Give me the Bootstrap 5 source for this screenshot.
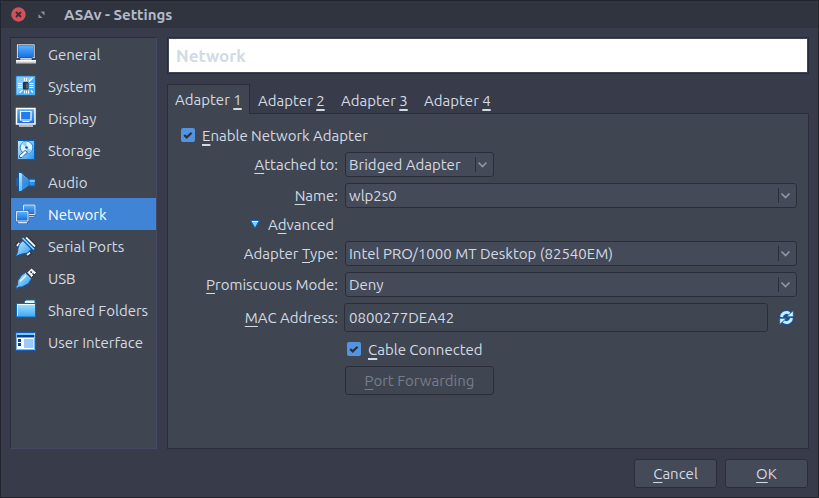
<!DOCTYPE html>
<html lang="en">
<head>
<meta charset="utf-8">
<meta name="viewport" content="width=device-width, initial-scale=1">
<title>ASAv - Settings</title>
<link href="https://cdn.jsdelivr.net/npm/bootstrap@5.3.0/dist/css/bootstrap.min.css" rel="stylesheet">
<style>
:root{--edge:#2b2e39;--win:#383c4a;--pane:#404651;--ctl:#454a58;--ink:#d3dae3;--accent:#4084d6}
body{background:var(--win);color:var(--ink);font:15px/21px Ubuntu,"Noto Sans","Open Sans",sans-serif}
.window{min-height:100vh;border:1px solid #22252e}
.titlebar{height:27px;background:#2f343f;padding:0 10px;border-radius:4px 4px 0 0}
.titlebar h1{font-size:15px;line-height:21px;font-weight:700;color:#b2bac8;margin-left:18px}
.titlebar button,.plain{background:none;border:0;padding:0;color:inherit;display:flex}
.resize{margin-left:11px}
.content{padding:9px 9px 0 9px;gap:10px}
.sidebar{width:147px;background:var(--pane);border:1px solid #434863;border-top-color:var(--edge);border-left-color:var(--edge)}
.sidebar a{height:32px;padding:0 4px;gap:11px;color:var(--ink);white-space:nowrap;text-decoration:none}
.sidebar a.current{background:var(--accent);color:#fff}
.sidebar svg{flex:none}
.heading{margin:0;border:1px solid var(--edge);background:#fff;box-shadow:inset 0 0 0 1px #404552;color:#d3dae6;font-size:17px;font-weight:700;line-height:21px;padding:7px 8px}
.tabs{margin-top:10px;margin-bottom:-1px}
.tabs button{background:none;border:1px solid transparent;border-bottom:0;padding:3px 7px 2px;height:30px;width:83px;color:var(--ink);white-space:nowrap;text-align:left;line-height:21px}
.tabs button.current{background:var(--pane);border-color:var(--edge);padding-bottom:4px;z-index:1}
.pane{border:1px solid var(--edge);background:var(--pane);padding:10px 11px 0 13px;gap:6px}
.formrow{display:grid;grid-template-columns:157px minmax(0,1fr);column-gap:7px;align-items:center}
.formrow>label{text-align:right;white-space:nowrap}
.check{height:22px;gap:7px}
.check input{width:14px;height:14px;margin:0;border:0;float:none}
.check input[type=checkbox]{border-radius:2px}
.check input:checked{background-color:#5294e2;background-size:14px;background-image:url("data:image/svg+xml,%3Csvg xmlns='http://www.w3.org/2000/svg' viewBox='0 0 14 14'%3E%3Cpath d='M3.2 7l2.500 2.400L10.600 4.800' fill='none' stroke='%232b3040' stroke-width='2.200'/%3E%3C/svg%3E")}
.cable{margin-left:2px}
select.combo{height:25px;padding:0 24px 0 3px;border:1px solid var(--edge);border-radius:3px;color:var(--ink);font-size:15px;line-height:21px;background:var(--ctl) url("data:image/svg+xml,%3Csvg xmlns='http://www.w3.org/2000/svg' width='18' height='15'%3E%3Cpath d='M.5 0v15' stroke='%232b2e39'/%3E%3Cpath d='M3.500 5.500L7.500 9.500l4-4' fill='none' stroke='%239197a3' stroke-width='1.600'/%3E%3C/svg%3E") no-repeat right center}
.short{width:149px}
.mac{height:29px;margin-left:-1px;padding:0 4px;border:1px solid var(--edge);border-radius:3px;background:#404552;color:var(--ink);font-size:15px}
.reload{margin:0 3px 0 11px}
.push{height:29px;padding:0;border:1px solid var(--edge);border-radius:3px;background:var(--ctl);color:var(--ink);font-size:15px;line-height:23px}
.push:disabled{background:var(--pane);border-color:var(--edge);color:#777d89;opacity:1}
.actions{padding:10px 10px 9px;gap:8px}
.actions .push{width:83px}
u{text-decoration-thickness:1px;text-underline-offset:3px;text-decoration-skip-ink:none}
.tabs u,.check u{text-decoration-thickness:2px}
</style>
</head>
<body>
<div class="window d-flex flex-column">
  <header class="titlebar d-flex align-items-center">
    <button type="button" aria-label="Close"><svg width="15" height="15" viewBox="0 0 15 15"><circle cx="7.5" cy="7.5" r="7.2" fill="#d35258"/><path d="M5 5l5 5M10 5l-5 5" stroke="#2f343f" stroke-width="2"/></svg></button>
    <button type="button" class="resize" aria-label="Maximize"><svg width="9" height="9" viewBox="0 0 9 9" fill="#8b93a1"><path d="M3.500 1.500h4V5.500zM1.500 4v4h4z"/></svg></button>
    <h1 class="mb-0">ASAv - Settings</h1>
  </header>
  <div class="content d-flex flex-grow-1">
    <nav class="sidebar flex-shrink-0" aria-label="Categories">
      <a href="#" class="d-flex align-items-center"><svg width="22" height="22" viewBox="0 0 22 22"><defs><linearGradient id="b" x2="0" y2="1"><stop stop-color="#55b5ff"/><stop offset="1" stop-color="#1968dd"/></linearGradient><linearGradient id="l" x2="1" y2="1"><stop stop-color="#c5edff"/><stop offset="1" stop-color="#2995ee"/></linearGradient></defs><path d="M1.500 1h18.500v14.500h-3v1.500h-12v-1.500h-3.500z" fill="#fff" stroke="#252c38" stroke-width=".7"/><path d="M3 2.500h15.500v11.500l-1.500 1h-12.500l-1.500-1z" fill="url(#b)" stroke="#06408e" stroke-width=".5"/><path d="M1 17h20v3.500H1z" fill="#c9c9c9"/><path d="M1 17h20v1.500H1z" fill="#fff"/></svg>General</a>
      <a href="#" class="d-flex align-items-center"><svg width="22" height="22" viewBox="0 0 22 22"><path d="M1 1h19.500v19.500H1z" fill="#4aaef4" stroke="#0a63bd"/><path d="M1.500 1.500h18.500L1.500 20z" fill="#82c9fa"/><path d="M8.500 7.500h4.500v6.500H8.500z" fill="#34383e" stroke="#18344f"/><path d="M11.500 8.500h1v5h-1z" fill="#888"/><path d="M3 8.500h4M3 10.500h4M3 12.500h4M14.500 8.500h4M14.500 10.500h4M14.500 12.500h4M9.500 18.500v-3M11.500 18.500v-3M13.500 18.500v-3M9.500 6V3M11.500 6V3M14 6.500l3.500-3.500M4.500 18l3-3M16 15.500l2 2" stroke="#fff" stroke-width="1.100"/></svg>System</a>
      <a href="#" class="d-flex align-items-center"><svg width="22" height="22" viewBox="0 0 22 22"><path d="M1.500 1.500h18.500v15.500h-18.500z" fill="url(#b)" stroke="#fff" stroke-width="1.500"/><path d="M5.500 4.500h10.500v8.500h-10.500z" fill="#247de6" stroke="#fff" stroke-width="1.200"/><path d="M7.500 14.500h7" stroke="#fff"/><path d="M4 19h14" stroke="#ddd" stroke-width="1.500"/></svg>Display</a>
      <a href="#" class="d-flex align-items-center"><svg width="22" height="22" viewBox="0 0 22 22"><path d="M2.500 1.500h17v19h-17z" fill="url(#l)" stroke="#075eb5"/><circle cx="11.500" cy="8.500" r="6.300" fill="#dff3ff" stroke="#1c69b0" stroke-width=".8"/><path d="M11.500 8.500L6.500 4.500A6 6 0 0 1 11.500 2.500zM11.500 8.500l5.500 3A6 6 0 0 1 11.500 14.500z" fill="#8fd0f8"/><circle cx="11.500" cy="8.500" r="1.300" fill="#094c99"/><path d="M10 11.500l2.500 1.500-5.500 5.500H4.500v-2z" fill="#fff" stroke="#155c9e" stroke-width=".9"/></svg>Storage</a>
      <a href="#" class="d-flex align-items-center"><svg width="22" height="22" viewBox="0 0 22 22"><path d="M13 8h7v7h-7z" fill="#2c92e9" stroke="#075bb0"/><path d="M13 10h7" stroke="#8dd3ff" stroke-width="1.500"/><path d="M3.500 1.500H6l8 7v6l-8 6H3.500z" fill="url(#l)" stroke="#075bb0"/><path d="M7 3v16l6-5V9z" fill="#2376c9" opacity=".65"/><path d="M3 7H1.500v8H3z" fill="#126bc0"/></svg>Audio</a>
      <a href="#" class="current d-flex align-items-center" aria-current="page"><svg width="22" height="22" viewBox="0 0 22 22"><path d="M7.500 1h13.500v11.500h-2v2h-8z" fill="#4c6585"/><path d="M8.500 2h11.500v9.500H8.500z" fill="url(#b)" stroke="#d5e4f5"/><path d="M11 13.500h8" stroke="#b9cbe0"/><path d="M.5 7.500H14V19h-1v2H2v-2H.5z" fill="#4c6585"/><path d="M1.500 8.500H13V18H1.500z" fill="url(#b)" stroke="#d5e4f5"/><path d="M3 19.700h9" stroke="#dce7f2" stroke-width="1.300"/></svg>Network</a>
      <a href="#" class="d-flex align-items-center"><svg width="22" height="22" viewBox="0 0 22 22"><path d="M11 2.500l9.500 9.500M1.500 11l3-3.500M12 20.500l3.500-3.500" stroke="#222831" stroke-width="4"/><path d="M11 2.500l9 9M2 11l2.500-3M12 20l3-2.500" stroke="#eee" stroke-width="2.200"/><path d="M8 5.500l8.500 8.500-4 4-5.500 1-3 1-2.500 1-.5-.5 1.500-3 .5-4 1.500-4.500z" fill="url(#l)" stroke="#075bb0"/><path d="M7 2.500L19.500 15" stroke="#05529d" stroke-width="3.600"/><path d="M7.500 3l11.500 11.500" stroke="#8bd2ff" stroke-width="1.700"/></svg>Serial Ports</a>
      <a href="#" class="d-flex align-items-center"><svg width="22" height="22" viewBox="0 0 22 22"><path d="M12 5.500l4.500-4.500 5 4.500-5 5z" fill="#f4f4f4" stroke="#252525" stroke-width=".8"/><path d="M15.500 4.500l1.300 1.300M17.500 6.500l1.300 1.300" stroke="#222" stroke-width="1.500"/><path d="M10.500 5.500l6 6-3 5-6.500 3.500L3.500 20 2 21.500.8 20 2.500 18l.5-4.500L6.500 8.500z" fill="url(#l)" stroke="#0860b6"/><path d="M5 14.500L11 8.500" stroke="#e4f8ff" stroke-width="1.500"/></svg>USB</a>
      <a href="#" class="d-flex align-items-center"><svg width="22" height="22" viewBox="0 0 22 22"><path d="M9.500 2.500l1.500-1.500h9v4h-11z" fill="#e7faff" stroke="#0768bd"/><path d="M1.500 4.500h19V18h-19z" fill="url(#f)" stroke="#0768bd"/><defs><linearGradient id="f" x2="0" y2="1"><stop stop-color="#9fe4ff"/><stop offset="1" stop-color="#42a5f5"/></linearGradient></defs><path d="M2 5.500h18" stroke="#eefcff"/><path d="M2.500 6v11" stroke="#c6efff"/></svg>Shared Folders</a>
      <a href="#" class="d-flex align-items-center"><svg width="22" height="22" viewBox="0 0 22 22"><path d="M1 1.500h19.500v18H1z" fill="#fff" stroke="#0a62be"/><path d="M2 2h17.500v2H2z" fill="#7bc8ff"/><path d="M2 4h17.500v2.500H2z" fill="#073f9d"/><path d="M3 8h3v3H3zM3 12h3v3H3z" fill="#063f9d"/><path d="M9 8h9.500v9H9z" fill="#9bc8ff"/><path d="M2 18.500h17.500V7" fill="none" stroke="#68b9f7"/></svg>User Interface</a>
    </nav>
    <main class="d-flex flex-column flex-grow-1">
      <h2 class="heading">Network</h2>
      <div class="tabs d-flex" role="tablist">
        <button type="button" class="current position-relative" role="tab" aria-selected="true">Adapter <u>1</u></button>
        <button type="button" role="tab" aria-selected="false">Adapter <u>2</u></button>
        <button type="button" role="tab" aria-selected="false">Adapter <u>3</u></button>
        <button type="button" role="tab" aria-selected="false">Adapter <u>4</u></button>
      </div>
      <form class="pane d-flex flex-column flex-grow-1">
        <div class="check d-flex align-items-center"><input class="form-check-input" type="checkbox" id="enable" checked><label for="enable"><u>E</u>nable Network Adapter</label></div>
        <div class="formrow"><label for="attached"><u>A</u>ttached to:</label><select class="form-select combo short" id="attached"><option>Bridged Adapter</option></select></div>
        <div class="formrow"><label for="name"><u>N</u>ame:</label><select class="form-select combo" id="name"><option>wlp2s0</option></select></div>
        <div class="formrow"><button type="button" class="plain align-items-center justify-content-end gap-2 pe-1" aria-expanded="true"><svg width="10" height="9" viewBox="0 0 10 9"><path d="M.7.7h8.600L5 8z" fill="#7bd0ff" stroke="#0867ca"/><path d="M2 1.500h6" stroke="#ecfaff"/></svg><span>A<u>d</u>vanced</span></button></div>
        <div class="formrow"><label for="type">Adapter <u>T</u>ype:</label><select class="form-select combo" id="type"><option>Intel PRO/1000 MT Desktop (82540EM)</option></select></div>
        <div class="formrow"><label for="mode"><u>P</u>romiscuous Mode:</label><select class="form-select combo" id="mode"><option>Deny</option></select></div>
        <div class="formrow"><label for="mac"><u>M</u>AC Address:</label><div class="d-flex align-items-center"><input type="text" class="mac form-control" id="mac" value="0800277DEA42"><button type="button" class="plain reload" aria-label="Generate a new MAC address"><svg width="15" height="15" viewBox="0 0 15 15" fill="none"><g stroke="#075fbd" stroke-width="4.500"><path d="M2.500 7A5 5 0 0 1 10.500 3.500M12.500 8A5 5 0 0 1 4.500 11.500"/></g><path d="M7.500 6.800h6.800V.5zM7.500 8.200H.7v6.300z" fill="#d5f4ff" stroke="#075fbd" stroke-width=".9"/><g stroke="#c6eeff" stroke-width="2.800"><path d="M2.500 7A5 5 0 0 1 10.500 3.500M12.500 8A5 5 0 0 1 4.500 11.500"/></g></svg></button></div></div>
        <div class="formrow"><span></span><div class="check cable d-flex align-items-center"><input class="form-check-input" type="checkbox" id="cable" checked><label for="cable"><u>C</u>able Connected</label></div></div>
        <div class="formrow"><span></span><button type="button" class="btn push short" disabled><u>P</u>ort Forwarding</button></div>
      </form>
    </main>
  </div>
  <footer class="actions d-flex justify-content-end">
    <button type="button" class="btn push"><u>C</u>ancel</button>
    <button type="button" class="btn push"><u>O</u>K</button>
  </footer>
</div>
</body>
</html>
